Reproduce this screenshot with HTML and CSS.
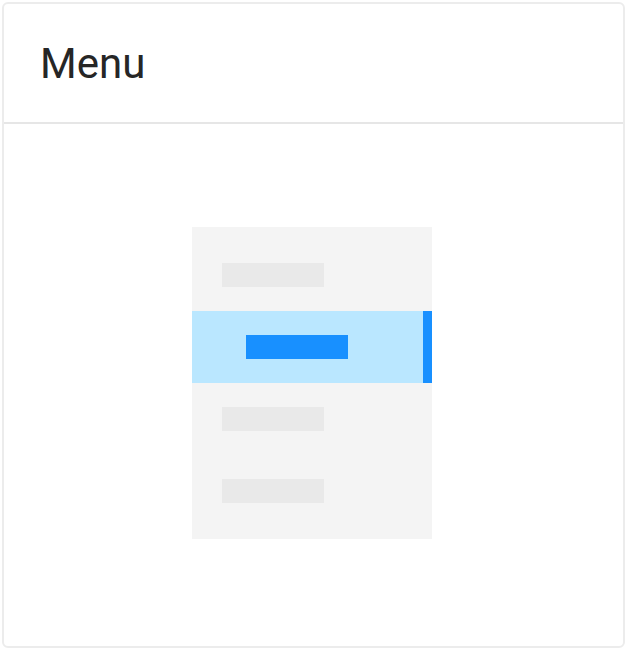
FILE: index.html
```html
<!DOCTYPE html>
<html>
<head>
<meta charset="utf-8">
<link rel="stylesheet" href="styles.css">
</head>
<body>
<div class="card">
  <div class="card-header"><span class="title">Menu</span></div>
  <div class="card-body">
    <div class="menu">
      <div class="item"><span class="bar"></span></div>
      <div class="item selected"><span class="bar"></span></div>
      <div class="item"><span class="bar"></span></div>
      <div class="item"><span class="bar"></span></div>
    </div>
  </div>
</div>
</body>
</html>
```
FILE: styles.css
```css
* { box-sizing: border-box; }
html, body { margin: 0; padding: 0; background: #fff; }
body { font-family: Roboto, "Liberation Sans", sans-serif; }
.card {
  margin: 2px;
  width: 623px;
  height: 646px;
  border: 2px solid #ececec;
  border-radius: 6px;
  display: flex;
  flex-direction: column;
  overflow: hidden;
}
.card-header {
  height: 120px;
  border-bottom: 2px solid #e6e6e6;
  padding-left: 36px;
  display: flex;
  align-items: center;
}
.title {
  font-size: 42px;
  color: #262626;
  line-height: 1;
  margin-top: 2px;
}
.card-body {
  flex: 1;
  display: flex;
  justify-content: center;
  padding-top: 103px;
  padding-right: 4px;
}
.menu {
  width: 240px;
  height: 312px;
  background: #f4f4f4;
  padding: 12px 0;
  display: flex;
  flex-direction: column;
}
.item {
  height: 72px;
  display: flex;
  align-items: center;
  padding-left: 30px;
}
.bar {
  width: 102px;
  height: 24px;
  background: #e9e9e9;
}
.item.selected {
  background: #bae7ff;
  padding-left: 54px;
  border-right: 9px solid #1890ff;
}
.item.selected .bar { background: #1890ff; }
```
